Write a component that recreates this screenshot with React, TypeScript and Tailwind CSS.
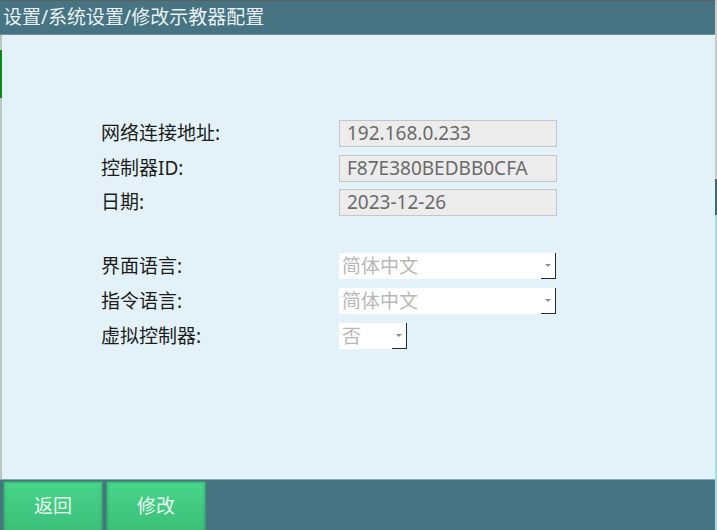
// 设置 / 系统设置 / 修改示教器配置 页面

const FONT = 'font-["Noto_Sans","Noto_Sans_CJK_SC",sans-serif]'

const INFO_ROWS = [
  { label: '网络连接地址:', value: '192.168.0.233' },
  { label: '控制器ID:', value: 'F87E380BEDBB0CFA' },
  { label: '日期:', value: '2023-12-26' },
]

function ReadonlyField({ value }: { value: string }) {
  return (
    <div className="w-[218px] h-[27px] bg-[#ececec] border border-[#c6c6c6] flex items-center pl-[7px] text-[19px] leading-none text-[#6b6b6b]">
      {value}
    </div>
  )
}

function ComboBox({ value, wide = true }: { value: string; wide?: boolean }) {
  return (
    <div
      className={`${wide ? 'w-[217px]' : 'w-[68px]'} h-[26px] bg-white flex items-stretch`}
    >
      <span className="flex-1 flex items-center pl-[3px] text-[19px] leading-none text-[#b8b8b8]">
        {value}
      </span>
      {/* 下拉按钮 */}
      <div className="w-[15px] border-r-[1.5px] border-b-[1.5px] border-[#2a2a2a] flex items-center justify-center">
        <div className="w-0 h-0 border-l-[3px] border-r-[3px] border-t-[3px] border-l-transparent border-r-transparent border-t-[#8c8c8c]" />
      </div>
    </div>
  )
}

function ActionButton({ children }: { children: string }) {
  return (
    <button className="w-[100px] h-[54px] bg-gradient-to-b from-[#47d68a] to-[#3bbd77] border border-[#3a9a6c] shadow-[inset_0_0_3px_rgba(0,60,30,0.35)] text-[19px] text-[#ecf8f1] pb-[4px]">
      {children}
    </button>
  )
}

export default function App() {
  return (
    <div className={`w-[717px] h-[530px] overflow-hidden flex ${FONT}`}>
      <div className="flex-1 flex flex-col">
        {/* 标题栏 */}
        <div className="h-[35px] shrink-0 bg-[#467482] border-t border-[#5c5f60] border-b border-b-[#6f929d] flex items-center pl-[3px] text-[19px] text-[#eaf1f3]">
          设置/系统设置/修改示教器配置
        </div>

        {/* 主体 */}
        <div className="flex-1 flex bg-[#e3f2f8]">
          <div className="w-[2px] flex flex-col">
            <div className="h-[15px] bg-[#b9c6c3]" />
            <div className="h-[48px] bg-[#0b8a12]" />
            <div className="flex-1 bg-[#b9c6c3]" />
          </div>

          <div className="flex-1 pt-[85px] pl-[99px] text-[19px] text-[#1c1c1c]">
            <div className="flex flex-col gap-[7.5px]">
              {INFO_ROWS.map((row) => (
                <div key={row.label} className="flex items-center">
                  <span className="w-[238px] leading-none">{row.label}</span>
                  <ReadonlyField value={row.value} />
                </div>
              ))}
            </div>

            <div className="flex flex-col gap-[9px] mt-[37px] pl-[1px]">
              <div className="flex items-center">
                <span className="w-[238px] leading-none -ml-[1px]">界面语言:</span>
                <ComboBox value="简体中文" />
              </div>
              <div className="flex items-center">
                <span className="w-[238px] leading-none -ml-[1px]">指令语言:</span>
                <ComboBox value="简体中文" />
              </div>
              <div className="flex items-center">
                <span className="w-[238px] leading-none -ml-[1px]">虚拟控制器:</span>
                <ComboBox value="否" wide={false} />
              </div>
            </div>
          </div>
        </div>

        {/* 底部按钮栏 */}
        <div className="h-[51px] shrink-0 bg-[#467482] border-t border-[#8eaab3] flex items-start gap-[3px] pl-[3px] pt-[1px]">
          <ActionButton>返回</ActionButton>
          <ActionButton>修改</ActionButton>
        </div>
      </div>

      {/* 右侧边条 */}
      <div className="w-[2px] flex flex-col">
        <div className="h-[179px] bg-[#c6cacb]" />
        <div className="h-[36px] bg-[#3e6a77]" />
        <div className="flex-1 bg-[#a6dbe9]" />
      </div>
    </div>
  )
}
